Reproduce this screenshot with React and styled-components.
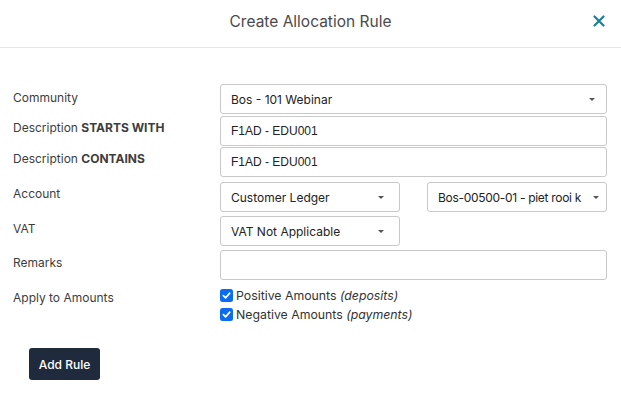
import React from "react";
import styled, { createGlobalStyle } from "styled-components";

const Global = createGlobalStyle`
  html, body { margin: 0; padding: 0; background: #fff; }
  body { font-family: "Inter", "Open Sans", sans-serif; color: #333; }
  * { box-sizing: border-box; }
`;

const Modal = styled.div`
  width: 621px;
  height: 394px;
  background: #fff;
`;

const Header = styled.header`
  height: 48px;
  border-bottom: 1px solid #e6e6e6;
  display: grid;
  grid-template-columns: 1fr auto 1fr;
  align-items: center;
  padding: 0 15px 5px;
`;

const Title = styled.h1`
  grid-column: 2;
  margin: 0;
  font-size: 15.5px;
  font-weight: 400;
  color: #4a4a4a;
`;

const Close = styled.button`
  justify-self: end;
  border: 0;
  background: none;
  padding: 0;
  width: 14px;
  height: 14px;
  display: flex;
  align-items: center;
  justify-content: center;
  cursor: pointer;
`;

const Form = styled.div`
  padding: 36px 14px 0 13px;
`;

const Row = styled.div`
  display: grid;
  grid-template-columns: 207px 1fr;
  margin-bottom: ${(p) => p.$gap}px;
`;

const Label = styled.div`
  font-size: 12px;
  line-height: 17px;
  padding-top: ${(p) => p.$top ?? 3}px;
  color: #3d3d3d;
  b { font-weight: 700; }
`;

const Controls = styled.div`
  display: flex;
  gap: 27px;
  min-width: 0;
`;

const Field = styled.div`
  height: 30px;
  border: 1px solid #c8c8c8;
  border-radius: 3px;
  background: #fff;
  display: flex;
  align-items: center;
  padding: 0 ${(p) => (p.$tight ? 7 : 10)}px 0 10px;
  width: ${(p) => (p.$w ? `${p.$w}px` : "100%")};
  flex: ${(p) => (p.$w ? "none" : "1 1 0")};
  min-width: 0;
  overflow: hidden;
`;

const InputText = styled.span`
  font-family: "Liberation Sans", Arial, sans-serif;
  font-size: 12px;
  color: #222;
`;

const SelectText = styled.span`
  flex: 1;
  min-width: 0;
  white-space: nowrap;
  overflow: hidden;
  font-size: 12px;
  letter-spacing: ${(p) => (p.$tight ? "-0.3px" : "0")};
  color: #222;
`;

const Caret = styled.span`
  flex: none;
  width: 0;
  height: 0;
  margin-left: 4px;
  margin-right: ${(p) => p.$mr ?? 5}px;
  border-left: 3px solid transparent;
  border-right: 3px solid transparent;
  border-top: 3.5px solid #555;
`;

const Checks = styled.div`
  display: flex;
  flex-direction: column;
  gap: 4px;
  padding-top: 1px;
`;

const CheckLine = styled.label`
  display: flex;
  align-items: center;
  gap: 3px;
  font-size: 12.3px;
  line-height: 15px;
  color: #333;
  i { font-style: italic; }
`;

const Box = styled.span`
  width: 13px;
  height: 13px;
  border-radius: 2.5px;
  background: #0b6cf0;
  display: flex;
  align-items: center;
  justify-content: center;
`;

const Footer = styled.div`
  padding: 26px 0 0 29px;
`;

const Button = styled.button`
  width: 71px;
  height: 32px;
  border: 0;
  border-radius: 3px;
  background: #1f2a3d;
  color: #fff;
  font-family: "Inter", sans-serif;
  font-weight: 500;
  font-size: 12px;
`;

const Check = ({ children }) => (
  <CheckLine>
    <Box>
      <svg width="9" height="9" viewBox="0 0 10 10">
        <path d="M1.5 5.2 L4 7.6 L8.6 2.4" fill="none" stroke="#fff" strokeWidth="1.9" strokeLinecap="round" strokeLinejoin="round" />
      </svg>
    </Box>
    <span>{children}</span>
  </CheckLine>
);

export default function App() {
  return (
    <>
      <Global />
      <Modal>
        <Header>
          <Title>Create Allocation Rule</Title>
          <Close aria-label="close">
            <svg width="12" height="12" viewBox="0 0 12 12">
              <path d="M1.5 1.5 L10.5 10.5 M10.5 1.5 L1.5 10.5" stroke="#1a7f99" strokeWidth="2.2" strokeLinecap="round" />
            </svg>
          </Close>
        </Header>
        <Form>
          <Row $gap={2}>
            <Label $top={5}>Community</Label>
            <Field>
              <SelectText>Bos - 101 Webinar</SelectText>
              <Caret $mr={1} />
            </Field>
          </Row>
          <Row $gap={1}>
            <Label>Description <b>STARTS WITH</b></Label>
            <Field><InputText>F1AD - EDU001</InputText></Field>
          </Row>
          <Row $gap={5}>
            <Label>Description <b>CONTAINS</b></Label>
            <Field><InputText>F1AD - EDU001</InputText></Field>
          </Row>
          <Row $gap={4}>
            <Label>Account</Label>
            <Controls>
              <Field $w={180}>
                <SelectText>Customer Ledger</SelectText>
                <Caret />
              </Field>
              <Field $tight>
                <SelectText $tight>Bos-00500-01 - piet rooi k</SelectText>
                <Caret $mr={0} />
              </Field>
            </Controls>
          </Row>
          <Row $gap={4}>
            <Label $top={4}>VAT</Label>
            <Controls>
              <Field $w={180}>
                <SelectText>VAT Not Applicable</SelectText>
                <Caret />
              </Field>
            </Controls>
          </Row>
          <Row $gap={7}>
            <Label $top={4}>Remarks</Label>
            <Field />
          </Row>
          <Row $gap={0}>
            <Label $top={2}>Apply to Amounts</Label>
            <Checks>
              <Check>Positive Amounts <i>(deposits)</i></Check>
              <Check>Negative Amounts <i>(payments)</i></Check>
            </Checks>
          </Row>
        </Form>
        <Footer>
          <Button>Add Rule</Button>
        </Footer>
      </Modal>
    </>
  );
}
